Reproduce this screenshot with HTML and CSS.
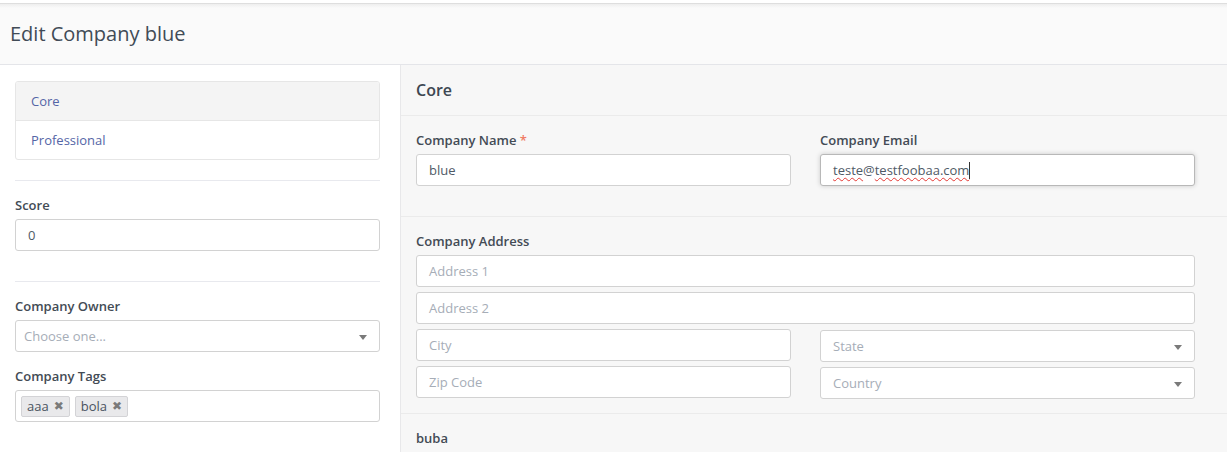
FILE: index.html
```html
<!DOCTYPE html>
<html>
<head>
<meta charset="utf-8">
<link rel="stylesheet" href="styles.css">
</head>
<body>
<div class="topline"></div>
<header class="page-header">
  <h1>Edit Company blue</h1>
</header>
<div class="main">
  <aside class="sidebar">
    <nav class="list-group">
      <a class="list-item active">Core</a>
      <a class="list-item">Professional</a>
    </nav>
    <hr class="divider">
    <div class="field">
      <label class="label">Score</label>
      <div class="input"><span class="value">0</span></div>
    </div>
    <hr class="divider">
    <div class="field">
      <label class="label">Company Owner</label>
      <div class="input select"><span class="placeholder">Choose one...</span><span class="arrow"></span></div>
    </div>
    <div class="field tags-field">
      <label class="label">Company Tags</label>
      <div class="input tags">
        <span class="tag">aaa <span class="x">✖</span></span>
        <span class="tag">bola <span class="x">✖</span></span>
      </div>
    </div>
  </aside>
  <section class="panel">
    <div class="panel-head">Core</div>
    <div class="section">
      <div class="grid2">
        <div class="field">
          <label class="label">Company Name <span class="req">*</span></label>
          <div class="input"><span class="value">blue</span></div>
        </div>
        <div class="field">
          <label class="label">Company Email</label>
          <div class="input focus"><span class="value"><span class="spell">teste</span>@<span class="spell">testfoobaa.com</span></span><span class="caret"></span></div>
        </div>
      </div>
    </div>
    <div class="section address">
      <label class="label">Company Address</label>
      <div class="stack">
        <div class="input"><span class="placeholder">Address 1</span></div>
        <div class="input"><span class="placeholder">Address 2</span></div>
        <div class="grid2 tight">
          <div class="stack">
            <div class="input"><span class="placeholder">City</span></div>
            <div class="input"><span class="placeholder">Zip Code</span></div>
          </div>
          <div class="stack offset">
            <div class="input select"><span class="placeholder">State</span><span class="arrow"></span></div>
            <div class="input select"><span class="placeholder">Country</span><span class="arrow"></span></div>
          </div>
        </div>
      </div>
    </div>
    <div class="section last">
      <label class="label">buba</label>
    </div>
  </section>
</div>
</body>
</html>
```

FILE: styles.css
```css
* { box-sizing: border-box; }
html, body { margin: 0; padding: 0; }
body {
  font-family: "Open Sans", "Noto Sans", sans-serif;
  font-size: 13px;
  color: #555;
  background: #fff;
  height: 452px;
  overflow: hidden;
  display: flex;
  flex-direction: column;
}
.topline {
  flex: none;
  height: 4px;
  background: #fff;
  border-bottom: 1px solid #dedede;
}
.page-header {
  flex: none;
  height: 61px;
  background: linear-gradient(#eeeeee, #fafafa 4px);
  border-bottom: 1px solid #e4e5e9;
  display: flex;
  align-items: center;
  padding: 0 10px 2px;
}
.page-header h1 {
  margin: 0;
  font-size: 20px;
  font-weight: 400;
  color: #414b56;
}
.main {
  display: flex;
  flex: 1;
  min-height: 0;
  overflow: hidden;
}
.sidebar {
  width: 400px;
  flex: none;
  padding: 16px 20px 0 15px;
  background: #fff;
}
.list-group {
  display: flex;
  flex-direction: column;
  border: 1px solid #e6e6e6;
  border-radius: 3px;
  overflow: hidden;
}
.list-item {
  height: 38px;
  display: flex;
  align-items: center;
  padding: 0 15px;
  color: #5465a6;
  font-size: 13px;
}
.list-item.active {
  height: 39px;
  background: #f4f4f4;
  border-bottom: 1px solid #e6e6e6;
}
.divider {
  border: 0;
  border-top: 1px solid #e8e9ee;
  margin: 20px 0 0;
}
.field { display: flex; flex-direction: column; }
.sidebar .divider + .field { padding-top: 15px; }
.sidebar .divider + .field + .divider { margin-top: 30px; }
.label {
  display: block;
  font-weight: 600;
  font-size: 13px;
  color: #434b55;
  line-height: 18px;
  margin-bottom: 5px;
}
.req { color: #f07c66; }
.input {
  position: relative;
  height: 32px;
  border: 1px solid #d2d2d2;
  border-radius: 3px;
  background: #fff;
  display: flex;
  align-items: center;
  padding: 0 12px;
  font-size: 13px;
  color: #555f6b;
}
.sidebar .input { padding: 0 8px 0 12px; }
.sidebar .select { padding-left: 8px; }
.value { color: #4f5a66; }
.placeholder { color: #a6adb7; }
.select .arrow {
  position: absolute;
  right: 12px;
  top: 14px;
  width: 0;
  height: 0;
  border-left: 4px solid transparent;
  border-right: 4px solid transparent;
  border-top: 5px solid #7a7a7a;
}
.tags-field { margin-top: 15px; }
.tags.input { padding: 0 5px; gap: 5px; }
.tag {
  display: inline-flex;
  align-items: center;
  height: 21px;
  padding: 0 5px 0 5px;
  background: #e9e9eb;
  border: 1px solid #d3d3d6;
  border-radius: 2px;
  color: #4a5360;
  font-size: 13px;
  gap: 5px;
}
.tag .x {
  font-size: 12px;
  line-height: 1;
  color: #7a7a7a;
  font-family: "DejaVu Sans", sans-serif;
}
.panel {
  flex: 1;
  background: #f7f7f7;
  border-left: 1px solid #e8e8ea;
}
.panel-head {
  height: 51px;
  border-bottom: 1px solid #ebebeb;
  display: flex;
  align-items: center;
  padding: 0 15px 1px;
  font-size: 16px;
  font-weight: 600;
  color: #3d4752;
}
.section {
  padding: 15px 32px 30px 15px;
  border-bottom: 1px solid #ebebeb;
}
.section.address { padding-bottom: 14px; }
.section.last { border-bottom: 0; padding-top: 15px; }
.grid2 {
  display: grid;
  grid-template-columns: 1fr 1fr;
  column-gap: 29px;
}
.stack { display: flex; flex-direction: column; gap: 5px; }
.stack.offset { padding-top: 1px; }
.input.focus {
  border-color: #b8b8b8;
  box-shadow: 0 0 5px rgba(0,0,0,0.18);
}
.spell {
  text-decoration: underline wavy #e53935;
  text-decoration-thickness: 1px;
  text-underline-offset: 2px;
}
.caret {
  display: inline-block;
  width: 1px;
  height: 17px;
  background: #333;
  margin-left: 0;
}
```
